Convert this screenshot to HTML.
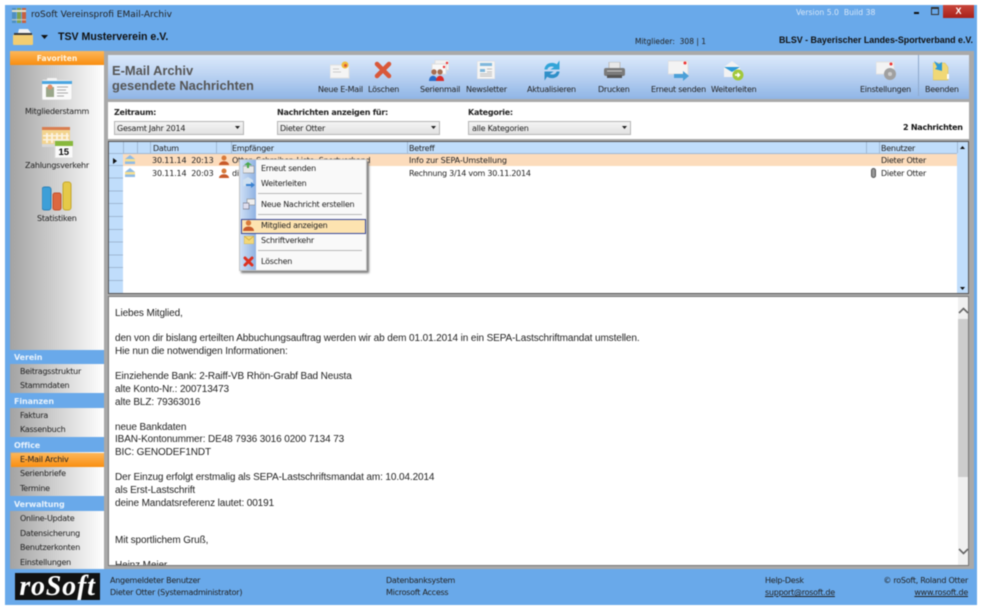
<!DOCTYPE html>
<html><head><meta charset="utf-8"><style>
html,body{margin:0;padding:0;background:#fff;width:983px;height:610px;overflow:hidden}
#r{position:absolute;left:0;top:0;width:983px;height:610px;filter:blur(.45px);font-family:"DejaVu Sans",sans-serif;font-size:8px;color:#222}
#r div,#r span.t,#r svg{position:absolute}
.t{white-space:nowrap;line-height:12px;margin-top:1px;letter-spacing:-.25px}
.b{font-weight:bold}
.l{font-family:"Liberation Sans",sans-serif;letter-spacing:0}
.n{letter-spacing:0}
.sh{left:10px;width:94px;height:14px;background:#69a9ea;color:#e8f2fc;font-weight:bold;font-size:8px;line-height:15px;text-indent:4px;letter-spacing:-.1px}
.si{left:10px;width:94px;background:linear-gradient(90deg,#a3a3a3,#fff)}
.dd{height:12px;border:1px solid #b5b5b5;background:linear-gradient(#f4f4f4,#e2e2e2)}
.v{top:142px;width:1px;height:11px;background:#9fb8d4}
.sep{left:258px;width:104px;height:1px;background:#b8b8b8}
.m{font-family:"Liberation Sans",sans-serif;font-size:10px;letter-spacing:-.11px;color:#222}
</style></head><body><div id="r">
<div style="left:5px;top:5px;width:972px;height:600px;background:#69a9ea"></div>

<svg style="left:12px;top:8px" width="14" height="16"><rect x="0" y="0" width="4" height="15" fill="#4f8fc0"/><rect x="5" y="0" width="4" height="15" fill="#7fa24f"/><rect x="10" y="0" width="4" height="15" fill="#c9603f"/><rect y="2" width="14" height="2" fill="#e6e0c8"/><rect y="11" width="14" height="1.500" fill="#e6e0c8" opacity=".6"/></svg>
<span class="t n" style="left:31px;top:8px;font-size:9px">roSoft Vereinsprofi EMail-Archiv</span>
<svg style="left:13px;top:28px" width="21" height="18"><path d="M1 5h18v3H1z" fill="#3a3a3a"/><path d="M6 1h9l3 4H5z" fill="#f2f2f2"/><path d="M0 7h20v9a1 1 0 0 1-1 1H1a1 1 0 0 1-1-1z" fill="#f2cd72"/></svg>
<svg style="left:41px;top:35px" width="7" height="4"><path d="M0 0h7L3.500 4z" fill="#111"/></svg>
<span class="t l b" style="left:58px;top:30px;font-size:10.600px;color:#111">TSV Musterverein e.V.</span>
<span class="t n" style="left:796px;top:6px;font-size:7.700px;color:#d5e6f8">Version 5.0&nbsp; Build 38</span>
<span class="t n" style="left:635px;top:35px;font-size:7.500px">Mitglieder:&nbsp; 308 | 1</span>
<span class="t l b" style="left:779px;top:33px;font-size:8.900px;color:#111">BLSV - Bayerischer Landes-Sportverband e.V.</span>
<div style="left:914px;top:12px;width:5px;height:2px;background:#111"></div>
<div style="left:931px;top:7px;width:6px;height:5px;border:1px solid #333;border-top-width:2px"></div>
<div style="left:943px;top:5px;width:31px;height:13px;background:linear-gradient(#c9473c,#a8201a);color:#fff;font:bold 9px/13px 'Liberation Sans';text-align:center">X</div>

<!-- sidebar -->
<div style="left:10px;top:51px;width:94px;height:14px;background:linear-gradient(#fdb75a,#f98e10);color:#fff4e0;font-weight:bold;font-size:7.600px;line-height:16px;text-align:center">Favoriten</div>
<div class="si" style="top:65px;height:285px"></div>
<svg style="left:42px;top:78px" width="30" height="22"><rect y="2" width="30" height="20" rx="2" fill="#fafafa" stroke="#ddd"/><rect x="5" y="0" width="10" height="3" rx="1" fill="#f4f4f4"/><rect y="3" width="30" height="3" fill="#4aa5e0"/><rect x="4" y="9" width="8" height="10" fill="#9aa78a"/><circle cx="8" cy="9" r="2.500" fill="#e0906a"/><path d="M15 9h11M15 12h9M15 15h11M15 18h7" stroke="#aaa"/></svg>
<span class="t" style="left:25px;top:105px">Mitgliederstamm</span>
<svg style="left:42px;top:127px" width="31" height="31"><rect width="28" height="19" fill="#f3d48f"/><rect width="28" height="3" fill="#d87d50"/><path d="M4 6h2v10H4zm5 0h2v10H9zm5 0h2v10h-2zm5 0h2v10h-2zm5 0h2v10h-2zM1 8h26v1.500H1zm0 4h26v1.500H1z" fill="#fff" opacity=".7"/><rect y="17" width="28" height="3" fill="#d8d8d8"/><rect x="13" y="14" width="18" height="17" fill="#fafafa" stroke="#ddd"/><rect x="13" y="14" width="18" height="5" fill="#88b83c"/><text x="16.500" y="28" font-family="Liberation Sans" font-weight="bold" font-size="9.500" fill="#111">15</text></svg>
<span class="t" style="left:25px;top:159px">Zahlungsverkehr</span>
<svg style="left:42px;top:181px" width="30" height="30"><rect x="0" y="6" width="9" height="23" rx="2.500" fill="#3d9fd8" stroke="#2b7fb6"/><rect x="11" y="12" width="8" height="17" rx="2" fill="#dd6840" stroke="#c2502c"/><rect x="21" y="1" width="8" height="28" rx="2.500" fill="#e5c948" stroke="#c4a62e"/></svg>
<span class="t" style="left:37px;top:212px">Statistiken</span>

<div class="sh" style="top:350px">Verein</div><div class="si" style="top:364px;height:29px"></div>
<span class="t" style="left:20px;top:365px">Beitragsstruktur</span><span class="t" style="left:20px;top:379px">Stammdaten</span>
<div class="sh" style="top:394px">Finanzen</div><div class="si" style="top:408px;height:29px"></div>
<span class="t" style="left:20px;top:409px">Faktura</span><span class="t" style="left:20px;top:423px">Kassenbuch</span>
<div class="sh" style="top:438px">Office</div><div class="si" style="top:452px;height:44px"></div>
<div style="left:11px;top:453px;width:93px;height:14px;background:linear-gradient(#fdb75a,#f98e10)"></div>
<span class="t" style="left:20px;top:453px">E-Mail Archiv</span><span class="t" style="left:20px;top:467px">Serienbriefe</span><span class="t" style="left:20px;top:482px">Termine</span>
<div class="sh" style="top:497px">Verwaltung</div><div class="si" style="top:511px;height:58px"></div>
<span class="t" style="left:20px;top:512px">Online-Update</span><span class="t" style="left:20px;top:527px">Datensicherung</span><span class="t" style="left:20px;top:541px">Benutzerkonten</span><span class="t" style="left:20px;top:556px">Einstellungen</span>

<!-- main frame -->
<div style="left:104px;top:51px;width:870px;height:518px;background:#a9a9a9"></div>
<div style="left:108px;top:55px;width:861px;height:44px;background:linear-gradient(#dbe9fb,#bcd3f2 45%,#8fb5e6)"></div>
<span class="t l b" style="left:112px;top:62px;font-size:12.900px;line-height:15px;color:#555">E-Mail Archiv<br>gesendete Nachrichten</span>

<svg style="left:330px;top:61px" width="21" height="18"><rect y="4" width="19" height="13" fill="#f4f4f4" stroke="#e0e0e0"/><path d="M3 8h6M3 11h8" stroke="#ccc"/><circle cx="15" cy="4" r="3.500" fill="#f2bd3c"/><circle cx="15.500" cy="4.500" r="1.500" fill="#d9583a"/></svg>
<svg style="left:374px;top:61px" width="18" height="18"><path d="M3 3l12 12M15 3L3 15" stroke="#d9583a" stroke-width="4.500" stroke-linecap="round"/></svg>
<svg style="left:429px;top:60px" width="20" height="21"><rect x="6" y="0" width="14" height="10" fill="#f1f1f1" stroke="#ddd"/><rect x="3" y="4" width="14" height="10" fill="#f8f8f8" stroke="#ddd"/><circle cx="18" cy="3" r="1.200" fill="#e33"/><circle cx="15" cy="7" r="1.200" fill="#e33"/><circle cx="5" cy="12" r="2.700" fill="#a86d50"/><circle cx="11" cy="12" r="2.700" fill="#a86d50"/><path d="M0 21c0-7 8-7 8 0z" fill="#2a6cc8"/><path d="M7 21c0-7 8-7 8 0z" fill="#d82a2a"/></svg>
<svg style="left:477px;top:61px" width="18" height="18"><rect width="18" height="18" fill="#f4f4f4" stroke="#ddd"/><rect x="3" y="2" width="12" height="3" fill="#7fb7dc"/><rect x="3" y="8" width="5" height="3" fill="#7fb7dc"/><path d="M10 8h5M10 11h5M3 13h12M3 15h12" stroke="#bbb"/></svg>
<svg style="left:542px;top:60px" width="20" height="21"><path d="M3 9C4 3 11 2 15 5l2-3v7h-7l3-2C10 5 6 6 5 9z" fill="#32a4d8" stroke="#32a4d8"/><path d="M17 12c-1 6-8 7-12 4l-2 3v-7h7l-3 2c3 2 7 1 8-2z" fill="#2f8fc8" stroke="#2f8fc8"/></svg>
<svg style="left:604px;top:62px" width="21" height="17"><rect x="5" y="0" width="11" height="7" fill="#e8e8e8" stroke="#bbb"/><rect x="0" y="6" width="21" height="8" rx="2" fill="#7b7b7b"/><rect x="3" y="13" width="15" height="3" fill="#555"/><path d="M3 9h15" stroke="#ccc"/></svg>
<svg style="left:668px;top:60px" width="22" height="21"><rect y="1" width="20" height="13" fill="#f3f3f3" stroke="#ddd"/><circle cx="17" cy="3" r="1.500" fill="#e33"/><path d="M6 14h9v-3l6 5-6 5v-3H6z" fill="#4ba0d8"/></svg>
<svg style="left:723px;top:60px" width="21" height="21"><path d="M1 7L9 1l8 6v10H1z" fill="#f2f2f2"/><path d="M1 7h16L9 12z" fill="#2d9ad8"/><circle cx="15" cy="15" r="5.500" fill="#a2c83c"/><path d="M12 15h4M14.500 13l2 2-2 2" stroke="#fff" fill="none" stroke-width="1.500"/></svg>
<svg style="left:876px;top:61px" width="21" height="20"><rect y="1" width="18" height="12" fill="#f3f3f3" stroke="#e0e0e0"/><circle cx="15" cy="3" r="1.500" fill="#e33"/><circle cx="14" cy="13" r="6" fill="#a0a0a0"/><circle cx="14" cy="13" r="2" fill="#ccc"/></svg>
<div style="left:918px;top:55px;width:1px;height:41px;background:#8ea9cc"></div>
<svg style="left:933px;top:61px" width="17" height="20"><path d="M0 2h12l3 4v13H0z" fill="#f0d877" stroke="#d9bc50" stroke-width=".5"/><path d="M1 0l5 3 3-2v9l-7-2 2-2z" fill="#2d9ad8"/><rect x="14" y="13" width="2" height="5" fill="#fff"/></svg>

<span class="t" style="left:318px;top:83px">Neue E-Mail</span>
<span class="t" style="left:368px;top:83px">Löschen</span>
<span class="t" style="left:420px;top:83px">Serienmail</span>
<span class="t" style="left:466px;top:83px">Newsletter</span>
<span class="t" style="left:527px;top:83px">Aktualisieren</span>
<span class="t" style="left:598px;top:83px">Drucken</span>
<span class="t" style="left:651px;top:83px">Erneut senden</span>
<span class="t" style="left:711px;top:83px">Weiterleiten</span>
<span class="t" style="left:860px;top:83px">Einstellungen</span>
<span class="t" style="left:925px;top:83px">Beenden</span>

<!-- filter -->
<div style="left:108px;top:102px;width:861px;height:37px;background:#fff"></div>
<span class="t b" style="left:114px;top:106px">Zeitraum:</span>
<span class="t b" style="left:277px;top:106px">Nachrichten anzeigen für:</span>
<span class="t b" style="left:468px;top:106px">Kategorie:</span>
<div class="dd" style="left:114px;top:121px;width:128px"></div><div class="dd" style="left:277px;top:121px;width:161px"></div><div class="dd" style="left:468px;top:121px;width:161px"></div>
<span class="t" style="left:117px;top:122px">Gesamt Jahr 2014</span>
<span class="t" style="left:280px;top:122px">Dieter Otter</span>
<span class="t" style="left:472px;top:122px">alle Kategorien</span>
<svg style="left:235px;top:126px" width="5" height="3"><path d="M0 0h5L2.500 3z" fill="#222"/></svg>
<svg style="left:431px;top:126px" width="5" height="3"><path d="M0 0h5L2.500 3z" fill="#222"/></svg>
<svg style="left:622px;top:126px" width="5" height="3"><path d="M0 0h5L2.500 3z" fill="#222"/></svg>
<span class="t b" style="left:903px;top:121px;color:#111">2 Nachrichten</span>

<!-- grid -->
<div style="left:108px;top:141px;width:861px;height:153px;background:#fff;border:1px solid #555;box-sizing:border-box"></div>
<div style="left:109px;top:142px;width:859px;height:11px;background:#c0ddfb"></div>
<div style="left:109px;top:153px;width:14px;height:140px;background:repeating-linear-gradient(#c0ddfb 0 11.800px,#9fb8d4 11.800px 12.800px)"></div>
<div style="left:123px;top:153px;width:834px;height:13px;background:#fcdcbc"></div>
<div style="left:957px;top:153px;width:11px;height:140px;background:#c0ddfb"></div>
<div style="left:109px;top:153px;width:848px;height:1px;background:#9fb8d4"></div>
<div class="v" style="left:123px"></div><div class="v" style="left:137px"></div><div class="v" style="left:150px"></div><div class="v" style="left:216px"></div><div class="v" style="left:231px"></div><div class="v" style="left:407px"></div><div class="v" style="left:866px"></div><div class="v" style="left:879px"></div><div class="v" style="left:957px"></div>
<span class="t" style="left:153px;top:142px">Datum</span><span class="t" style="left:232px;top:142px">Empfänger</span><span class="t" style="left:409px;top:142px">Betreff</span><span class="t" style="left:881px;top:142px">Benutzer</span>
<svg style="left:960px;top:146px" width="5" height="3"><path d="M0 3h5L2.500 0z" fill="#111"/></svg>
<svg style="left:960px;top:287px" width="5" height="3"><path d="M0 0h5L2.500 3z" fill="#111"/></svg>
<svg style="left:113px;top:158px" width="4" height="6"><path d="M0 0l4 3-4 3z" fill="#111"/></svg>
<svg style="left:125px;top:155px" width="10" height="9"><path d="M0 4l5-4 5 4v5H0z" fill="#8fbbe6"/><path d="M0 4h10v2.500H0z" fill="#f6df90"/></svg>
<svg style="left:125px;top:168px" width="10" height="9"><path d="M0 4l5-4 5 4v5H0z" fill="#8fbbe6"/><path d="M0 4h10v2.500H0z" fill="#f6df90"/></svg>
<svg style="left:219px;top:155px" width="10" height="10"><circle cx="5" cy="3" r="2.500" fill="#d87a3a"/><path d="M0 10c0-5 10-5 10 0z" fill="#c85a2a"/></svg>
<svg style="left:219px;top:168px" width="10" height="10"><circle cx="5" cy="3" r="2.500" fill="#d87a3a"/><path d="M0 10c0-5 10-5 10 0z" fill="#c85a2a"/></svg>
<span class="t" style="left:152px;top:154px;letter-spacing:-.15px">30.11.14&nbsp; 20:13</span>
<span class="t" style="left:152px;top:167px;letter-spacing:-.15px">30.11.14&nbsp; 20:03</span>
<span class="t" style="left:232px;top:154px">Otter, Schreiber, Liste, Sportverband</span>
<span class="t" style="left:232px;top:167px">die Mitglieder</span>
<span class="t" style="left:409px;top:154px;letter-spacing:-.13px">Info zur SEPA-Umstellung</span>
<span class="t" style="left:409px;top:167px">Rechnung 3/14 vom 30.11.2014</span>
<span class="t" style="left:881px;top:154px">Dieter Otter</span>
<span class="t" style="left:881px;top:167px">Dieter Otter</span>
<svg style="left:871px;top:168px" width="5" height="10"><rect x=".5" y=".5" width="4" height="9" rx="2" fill="#999" stroke="#555"/></svg>

<!-- message -->
<div style="left:108px;top:296px;width:861px;height:270px;background:#fff;border:1px solid #777;box-sizing:border-box;overflow:hidden"></div>
<div style="left:958px;top:297px;width:10px;height:268px;background:#f0f0f0"></div>
<div style="left:958px;top:319px;width:10px;height:158px;background:#cdcdcd"></div>
<svg style="left:958px;top:307px" width="11" height="7"><path d="M1 6l4.500-4.500L10 6" stroke="#666" stroke-width="1.600" fill="none"/></svg>
<svg style="left:958px;top:548px" width="11" height="7"><path d="M1 1l4.500 4.500L10 1" stroke="#666" stroke-width="1.600" fill="none"/></svg>
<div style="left:115px;top:297px;width:840px;height:268px;overflow:hidden">
<span class="t m" style="left:0;top:10px">Liebes Mitglied,</span>
<span class="t m" style="left:0;top:35px">den von dir bislang erteilten Abbuchungsauftrag werden wir ab dem 01.01.2014 in ein SEPA-Lastschriftmandat umstellen.</span>
<span class="t m" style="left:0;top:48px">Hie nun die notwendigen Informationen:</span>
<span class="t m" style="left:0;top:73px">Einziehende Bank: 2-Raiff-VB Rhön-Grabf Bad Neusta</span>
<span class="t m" style="left:0;top:86px">alte Konto-Nr.: 200713473</span>
<span class="t m" style="left:0;top:99px">alte BLZ: 79363016</span>
<span class="t m" style="left:0;top:124px">neue Bankdaten</span>
<span class="t m" style="left:0;top:136px">IBAN-Kontonummer: DE48 7936 3016 0200 7134 73</span>
<span class="t m" style="left:0;top:149px">BIC: GENODEF1NDT</span>
<span class="t m" style="left:0;top:174px">Der Einzug erfolgt erstmalig als SEPA-Lastschriftsmandat am: 10.04.2014</span>
<span class="t m" style="left:0;top:187px">als Erst-Lastschrift</span>
<span class="t m" style="left:0;top:200px">deine Mandatsreferenz lautet: 00191</span>
<span class="t m" style="left:0;top:237px">Mit sportlichem Gruß,</span>
<span class="t m" style="left:0;top:262px">Heinz Meier</span>
</div>

<!-- context menu -->
<div style="left:239px;top:159px;width:128px;height:112px;background:#f9f9f9;border:1px solid #c4c4c4;box-sizing:border-box;box-shadow:2px 2px 2px #777"></div>
<div style="left:240px;top:160px;width:16px;height:110px;background:linear-gradient(90deg,#cfe0f6,#8fb2e2)"></div>
<div style="left:241px;top:219px;width:123px;height:13px;background:#fde3b0;border:1px solid #3b4a9a"></div>
<div class="sep" style="top:193px"></div><div class="sep" style="top:214px"></div><div class="sep" style="top:250px"></div>
<svg style="left:243px;top:162px" width="12" height="12"><rect y="4" width="11" height="7" fill="#e8e8e8" stroke="#888" stroke-width=".6"/><path d="M5 0l4 3H6v3H4V3H1z" fill="#4aa84a"/></svg>
<svg style="left:243px;top:177px" width="12" height="12"><path d="M0 3l5-3 5 3v6H0z" fill="#cfe0f0"/><path d="M3 7h5V5l4 3-4 3V9H3z" fill="#3b82d0"/></svg>
<svg style="left:243px;top:198px" width="12" height="12"><rect x="4" y="1" width="8" height="6" fill="#eee" stroke="#888" stroke-width=".6"/><rect y="5" width="6" height="6" fill="#dde" stroke="#667" stroke-width=".6"/></svg>
<svg style="left:243px;top:220px" width="11" height="11"><circle cx="5.500" cy="3" r="2.700" fill="#d87a3a"/><path d="M0 11c0-6 11-6 11 0z" fill="#c85a2a"/></svg>
<svg style="left:244px;top:236px" width="10" height="8"><rect width="10" height="8" fill="#f3d87a" stroke="#c9a53c" stroke-width=".6"/><path d="M0 0l5 4 5-4" fill="none" stroke="#c9a53c" stroke-width=".7"/></svg>
<svg style="left:243px;top:256px" width="11" height="11"><path d="M2 2l7 7M9 2L2 9" stroke="#dd3020" stroke-width="3" stroke-linecap="round"/></svg>
<span class="t" style="left:261px;top:162px">Erneut senden</span>
<span class="t" style="left:261px;top:177px">Weiterleiten</span>
<span class="t" style="left:261px;top:198px">Neue Nachricht erstellen</span>
<span class="t" style="left:261px;top:219px">Mitglied anzeigen</span>
<span class="t" style="left:261px;top:234px">Schriftverkehr</span>
<span class="t" style="left:261px;top:255px">Löschen</span>

<!-- footer -->
<div style="left:15px;top:573px;width:85px;height:27px;background:#111;color:#fff;font:italic bold 28px/28px 'Liberation Serif',serif;letter-spacing:.8px;text-align:center;overflow:hidden">roSoft</div>
<span class="t" style="left:110px;top:574px">Angemeldeter Benutzer</span>
<span class="t" style="left:110px;top:586px">Dieter Otter (Systemadministrator)</span>
<span class="t" style="left:386px;top:574px">Datenbanksystem</span>
<span class="t" style="left:386px;top:586px">Microsoft Access</span>
<span class="t" style="left:765px;top:574px">Help-Desk</span>
<span class="t" style="left:765px;top:586px;text-decoration:underline">support@rosoft.de</span>
<span class="t" style="right:15px;top:574px">© roSoft, Roland Otter</span>
<span class="t" style="right:15px;top:586px;text-decoration:underline">www.rosoft.de</span>
</div></body></html>
